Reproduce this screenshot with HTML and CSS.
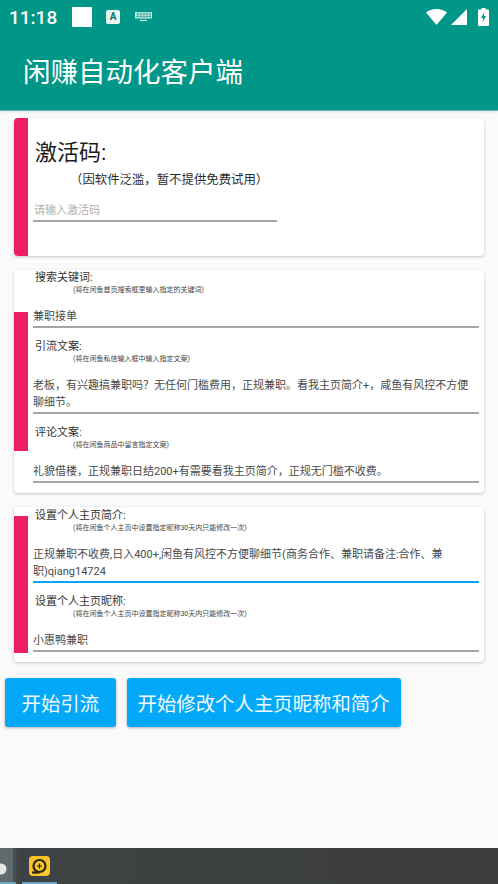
FILE: index.html
```html
<!DOCTYPE html>
<html lang="zh-CN">
<head>
  <meta charset="UTF-8">
  <meta name="viewport" content="width=device-width, initial-scale=1.0">
  <title>闲赚自动化客户端</title>
  <link rel="stylesheet" href="styles.css">
</head>
<body>
  <header class="appbar">
    <div class="status">
      <span class="time">11:18</span>
      <span class="notif-box"></span>
      <span class="notif-a">A</span>
      <svg class="notif-kb" width="17" height="10" viewBox="0 0 17 10">
        <path d="M0 0h17v6.5H0z" fill="#d5ece8"/>
        <path d="M1 2h15M1 4.4h15" stroke="#009688" stroke-width=".6"/>
        <path d="M3 0v6M6 0v6M9 0v6M12 0v6M15 0v6" stroke="#009688" stroke-width=".6"/>
        <path d="M5 8.5h7" stroke="#d5ece8" stroke-width="1.2"/>
      </svg>
      <span class="status-right">
        <svg width="21" height="16" viewBox="0 0 21 16"><path d="M0 3.6C2.8 1.2 6.4 0 10.5 0S18.200 1.200 21 3.600L10.500 16z" fill="#fff"/></svg>
        <svg width="16" height="16" viewBox="0 0 16 16"><path d="M16 0v16H0z" fill="#fff"/></svg>
        <svg class="battery" width="11" height="18" viewBox="0 0 11 18"><path d="M3.500 0h4v1.500H10a1 1 0 0 1 1 1V17a1 1 0 0 1-1 1H1a1 1 0 0 1-1-1V2.500a1 1 0 0 1 1-1h2.500z" fill="#fff"/><path d="M6.500 3.500 3 10h2.200l-.7 4.500L8 8H5.700z" fill="#009688"/></svg>
      </span>
    </div>
    <h1>闲赚自动化客户端</h1>
  </header>

  <main class="content">
    <section class="card card-code">
      <div class="stripe stripe-full"></div>
      <div class="card-body">
        <h2>激活码:</h2>
        <p class="notice">（因软件泛滥，暂不提供免费试用）</p>
        <div class="input input-code placeholder">请输入激活码</div>
      </div>
    </section>

    <section class="card">
      <div class="stripe stripe-search"></div>
      <div class="card-body">
        <div class="field">
          <div class="label">搜索关键词:</div>
          <div class="hint">(将在闲鱼首页搜索框里输入指定的关键词)</div>
          <div class="input">兼职接单</div>
        </div>
        <div class="field">
          <div class="label">引流文案:</div>
          <div class="hint">(将在闲鱼私信输入框中输入指定文案)</div>
          <div class="input">老板，有兴趣搞兼职吗？无任何门槛费用，正规兼职。看我主页简介+，咸鱼有风控不方便聊细节。</div>
        </div>
        <div class="field">
          <div class="label">评论文案:</div>
          <div class="hint">(将在闲鱼商品中留言指定文案)</div>
          <div class="input">礼貌借楼，正规兼职日结200+有需要看我主页简介，正规无门槛不收费。</div>
        </div>
      </div>
    </section>

    <section class="card card-profile">
      <div class="stripe stripe-profile"></div>
      <div class="card-body">
        <div class="field">
          <div class="label">设置个人主页简介:</div>
          <div class="hint">(将在闲鱼个人主页中设置指定昵称30天内只能修改一次)</div>
          <div class="input focused">正规兼职不收费,日入400+,闲鱼有风控不方便聊细节(商务合作、兼职请备注:合作、兼<br>职)qiang14724</div>
        </div>
        <div class="field">
          <div class="label">设置个人主页昵称:</div>
          <div class="hint">(将在闲鱼个人主页中设置指定昵称30天内只能修改一次)</div>
          <div class="input">小惠鸭兼职</div>
        </div>
      </div>
    </section>

    <div class="actions">
      <button>开始引流</button>
      <button>开始修改个人主页昵称和简介</button>
    </div>
  </main>

  <footer class="taskbar">
    <div class="task task-first">
      <svg width="7" height="12" viewBox="0 0 7 12"><circle cx="1" cy="6" r="5.500" fill="#e4e6e6"/></svg>
    </div>
    <div class="task task-app">
      <svg width="21" height="20" viewBox="0 0 21 20">
        <rect width="21" height="20" rx="4" fill="#f7c52b"/>
        <circle cx="10.500" cy="10" r="6" fill="none" stroke="#2b2413" stroke-width="2.200"/>
        <path d="M3 16.500h7.500" stroke="#2b2413" stroke-width="2.200"/>
        <path d="M10.500 7.500v5M8 10h5" stroke="#2b2413" stroke-width="1.200"/>
      </svg>
    </div>
  </footer>
</body>
</html>
```

FILE: styles.css
```css
* {
  box-sizing: border-box;
}
html, body {
  height: 100%;
}
body {
  margin: 0;
  display: flex;
  flex-direction: column;
  overflow: hidden;
  background: #fafafa;
  color: #3c3c3c;
  font-family: Roboto, "Noto Sans CJK SC", sans-serif;
}

.appbar {
  height: 111px;
  flex: none;
  background: #009688;
  color: #fff;
  border-bottom: 1px solid #5cbcb0;
  box-shadow: 0 1px 2px rgba(0,0,0,0.1);
}
.status {
  height: 34px;
  display: flex;
  align-items: center;
  padding: 0 9px;
}
.time {
  width: 63px;
  font-size: 19px;
  font-weight: 500;
}
.notif-box {
  width: 20px;
  height: 20px;
  margin-right: 14px;
  background: #fff;
}
.notif-a {
  width: 14px;
  height: 14px;
  margin-right: 15px;
  background: #e8f5f3;
  border-radius: 2px;
  color: #00786c;
  font-size: 10px;
  font-weight: 700;
  line-height: 14px;
  text-align: center;
}
.status-right {
  margin-left: auto;
  display: flex;
  align-items: center;
  gap: 4px;
}
.battery {
  margin-left: 7px;
}
.appbar h1 {
  margin: 14px 0 0 23px;
  font-size: 27.500px;
  font-weight: 400;
  line-height: 50px;
}

.content {
  flex: 1;
  padding-top: 7px;
}
.card {
  display: flex;
  margin: 0 14px 14px;
  background: #fff;
  border-radius: 4px;
  box-shadow: 0 1px 3px rgba(0,0,0,0.22);
  overflow: hidden;
}
.stripe {
  width: 14px;
  flex: none;
  background: #ec1e66;
}
.stripe-full {
  height: 138px;
}
.stripe-search {
  height: 139px;
  margin-top: 42px;
}
.stripe-profile {
  height: 137px;
  margin-top: 9px;
}
.card-body {
  flex: 1;
  min-width: 0;
  padding: 0 5px 10px;
}
.card-code .card-body {
  height: 138px;
  padding-top: 21px;
}
.card-profile .card-body {
  padding-top: 1px;
}

h2 {
  margin: 0 0 0 2px;
  font-size: 22px;
  font-weight: 400;
  line-height: 28px;
  color: #1c1c1c;
}
.notice {
  margin: 4px 0 0 37px;
  font-size: 12.400px;
  line-height: 17px;
  color: #2c2c2c;
}

.field + .field {
  margin-top: 11px;
}
.label {
  margin-left: 2px;
  font-size: 11px;
  line-height: 16px;
  color: #333;
}
.hint {
  margin: 0 0 14px 40px;
  font-size: 7px;
  line-height: 8px;
  color: #444;
}
.input {
  padding-bottom: 1px;
  border-bottom: 2px solid #a6a6a6;
  font-size: 11px;
  line-height: 17px;
  color: #4a4a4a;
}
.input.focused {
  border-color: #03a9f4;
}
.input-code {
  width: 244px;
  margin-top: 14px;
}
.placeholder {
  padding-left: 1px;
  color: #b0b0b0;
}

.actions {
  display: flex;
  gap: 11px;
  margin: 16px 0 0 5px;
}
button {
  height: 49px;
  padding: 0 11px;
  background: #03a9f8;
  border: none;
  border-radius: 3px;
  box-shadow: 0 1px 3px rgba(0,0,0,0.3);
  color: #f2fbff;
  font-family: inherit;
  font-size: 19.400px;
}
.actions button:first-child {
  padding: 0 16.500px;
}

.taskbar {
  height: 36px;
  flex: none;
  display: flex;
  background: linear-gradient(to right, #4b5a5c 0, #3d4344 20px, #3c3c3c 100%);
}
.task {
  border-bottom: 2px solid #6aa4c8;
  display: flex;
  align-items: flex-start;
}
.task-first {
  width: 16px;
  padding-top: 15px;
  background: linear-gradient(to right, #5f6b6e 13px, #465052 13px);
}
.task-app {
  width: 35px;
  margin-left: 6px;
  padding: 8px 0 0 7px;
}
```
